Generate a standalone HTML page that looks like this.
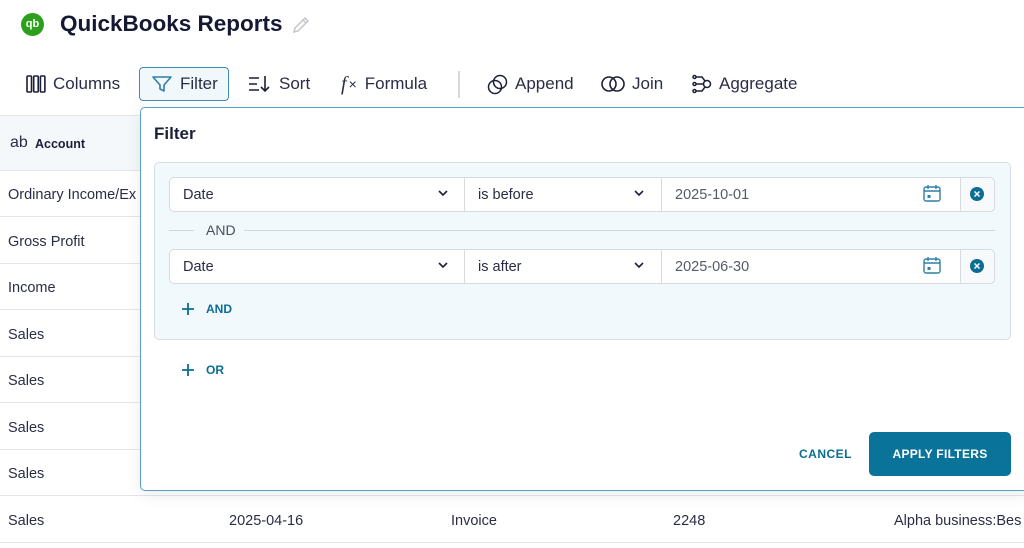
<!DOCTYPE html>
<html><head><meta charset="utf-8"><style>
*{box-sizing:border-box;margin:0;padding:0}
body{width:1024px;height:548px;overflow:hidden;background:#fff;font-family:"Liberation Sans",sans-serif;color:#1c1f3a;position:relative}
.abs{position:absolute}
.tb{position:absolute;top:67px;height:34px;display:flex;align-items:center;font-size:17px;color:#2a2d45}
.tb svg{margin-right:7px}
.row{position:absolute;left:0;width:1024px;height:1px;background:#e3e6ea}
.cell{position:absolute;left:8px;font-size:14.5px;color:#2a2d45}
.sel{position:absolute;height:35px;background:#fff;border:1px solid #d6dbe0;font-size:14.5px;display:flex;align-items:center;padding-left:13px;color:#2a2d45}
.blue{color:#0a6d94}
</style></head><body>
<div class="abs" style="left:21px;top:13px;width:23px;height:23px;border-radius:50%;background:#2ca01c;color:#fff;font-size:11px;font-weight:bold;text-align:center;line-height:23px">qb</div>
<div class="abs" style="left:60px;top:11px;font-size:22.5px;font-weight:bold;color:#141833">QuickBooks Reports</div>
<svg class="abs" style="left:291px;top:15px" width="20" height="20" viewBox="0 0 20 20"><path d="M3 17l1-4L14 3l3 3L7 16z M12 5l3 3" fill="none" stroke="#c2c6cc" stroke-width="1.5"/></svg>
<div class="tb" style="left:26px"><svg width="20" height="20" viewBox="0 0 20 20" fill="none" stroke="#1c1f3a" stroke-width="1.6"><rect x="1" y="2" width="4.5" height="16" rx="1"/><rect x="7.7" y="2" width="4.5" height="16" rx="1"/><rect x="14.4" y="2" width="4.5" height="16" rx="1"/></svg>Columns</div>
<div class="tb" style="left:139px;width:90px;border:1px solid #3f8fb0;border-radius:4px;background:#f1f8fb;padding-left:11px"><svg width="22" height="20" viewBox="0 0 22 20" fill="none" stroke="#2f7fa6" stroke-width="1.6"><path d="M2 3h18l-7 8v6l-4-2v-4z" stroke-linejoin="round"/></svg>Filter</div>
<div class="tb" style="left:248px"><svg width="24" height="20" viewBox="0 0 24 20" fill="none" stroke="#1c1f3a" stroke-width="1.6"><path d="M1 4h10M1 10h8M1 16h10M17 2v15M13 13l4 4 4-4"/></svg>Sort</div>
<div class="tb" style="left:341px"><span style="font-style:italic;font-family:'Liberation Serif',serif;font-size:20px;margin-right:2px">f</span><span style="font-size:14px;margin-right:8px">×</span>Formula</div>
<div class="abs" style="left:458px;top:71px;width:2px;height:27px;background:#d5d8dc"></div>
<div class="tb" style="left:487px"><svg width="21" height="21" viewBox="0 0 21 21" fill="none" stroke="#1c1f3a" stroke-width="1.5"><circle cx="8" cy="13" r="6.5"/><circle cx="13" cy="8" r="6.5"/></svg>Append</div>
<div class="tb" style="left:601px"><svg width="24" height="20" viewBox="0 0 24 20" fill="none" stroke="#1c1f3a" stroke-width="1.6"><circle cx="8" cy="10" r="7"/><circle cx="16" cy="10" r="7"/></svg>Join</div>
<div class="tb" style="left:692px"><svg width="20" height="20" viewBox="0 0 20 20" fill="none" stroke="#1c1f3a" stroke-width="1.5"><circle cx="2.5" cy="3" r="1.5"/><circle cx="2.5" cy="10" r="1.5"/><circle cx="2.5" cy="17" r="1.5"/><path d="M4 3h6l3 4M4 10h8M4 17h6l3-4"/><circle cx="15" cy="10" r="3.5"/></svg>Aggregate</div>
<div class="abs" style="left:0;top:115px;width:1024px;height:55px;background:#f4f8fa;border-top:1px solid #e3e6ea"></div>
<div class="abs" style="left:10px;top:134px;font-size:16px;color:#2a2d45">ab</div>
<div class="abs" style="left:35px;top:137px;font-size:12.5px;font-weight:bold">Account</div>
<div class="row" style="top:170px"></div><div class="row" style="top:216px"></div><div class="row" style="top:263px"></div><div class="row" style="top:309px"></div><div class="row" style="top:356px"></div><div class="row" style="top:402px"></div><div class="row" style="top:449px"></div><div class="row" style="top:495px"></div><div class="row" style="top:542px"></div>
<div class="cell" style="top:187px">Ordinary Income/Ex</div>
<div class="cell" style="top:234px">Gross Profit</div>
<div class="cell" style="top:280px">Income</div>
<div class="cell" style="top:327px">Sales</div>
<div class="cell" style="top:373px">Sales</div>
<div class="cell" style="top:420px">Sales</div>
<div class="cell" style="top:466px">Sales</div>
<div class="cell" style="top:513px">Sales</div>
<div class="cell" style="top:513px;left:229px">2025-04-16</div>
<div class="cell" style="top:513px;left:451px">Invoice</div>
<div class="cell" style="top:513px;left:673px">2248</div>
<div class="cell" style="top:513px;left:894px;white-space:nowrap">Alpha business:Bes</div>
<div class="abs" style="left:140px;top:107px;width:890px;height:384px;background:#fff;border:1.5px solid #5a9fbf;border-radius:5px;box-shadow:0 4px 16px rgba(0,0,0,0.08)"></div>
<div class="abs" style="left:154px;top:124px;font-size:17px;font-weight:bold;color:#1c1f3a">Filter</div>
<div class="abs" style="left:154px;top:162px;width:857px;height:178px;background:#f2f9fc;border:1px solid #d6dde2;border-radius:5px"></div>
<div class="sel" style="left:169px;top:177px;width:296px;border-radius:5px 0 0 5px">Date</div>
<div class="sel" style="left:464px;top:177px;width:198px">is before</div>
<div class="sel" style="left:661px;top:177px;width:300px;color:#555a66">2025-10-01</div>
<div class="sel" style="left:960px;top:177px;width:35px;border-radius:0 5px 5px 0;background:#f7f9fa"></div>
<div class="abs" style="left:169px;top:230px;width:25px;height:1px;background:#cfd5da"></div>
<div class="abs" style="left:206px;top:222px;font-size:14px;color:#4a4e5c">AND</div>
<div class="abs" style="left:244px;top:230px;width:751px;height:1px;background:#cfd5da"></div>
<div class="sel" style="left:169px;top:249px;width:296px;border-radius:5px 0 0 5px">Date</div>
<div class="sel" style="left:464px;top:249px;width:198px">is after</div>
<div class="sel" style="left:661px;top:249px;width:300px;color:#555a66">2025-06-30</div>
<div class="sel" style="left:960px;top:249px;width:35px;border-radius:0 5px 5px 0;background:#f7f9fa"></div>
<svg class="abs" style="left:0;top:0" width="1024" height="548" fill="none">
<g stroke="#1c1f3a" stroke-width="1.6"><path d="M439 191l4 4 4-4M635 191l4 4 4-4M439 263l4 4 4-4M635 263l4 4 4-4"/></g>
<g stroke="#2f7fa6" stroke-width="1.4"><rect x="924" y="187" width="16" height="14" rx="2"/><path d="M924 191h16M928 185v4M936 185v4"/><rect x="924" y="259" width="16" height="14" rx="2"/><path d="M924 263h16M928 257v4M936 257v4"/></g>
<rect x="927.5" y="195" width="3" height="3" fill="#2f7fa6"/><rect x="927.5" y="267" width="3" height="3" fill="#2f7fa6"/>
<circle cx="977" cy="194" r="7" fill="#0a6d94"/><circle cx="977" cy="266" r="7" fill="#0a6d94"/>
<g stroke="#fff" stroke-width="1.5"><path d="M974.5 191.5l5 5M979.5 191.5l-5 5M974.5 263.5l5 5M979.5 263.5l-5 5"/></g>
<g stroke="#0a6d94" stroke-width="1.8"><path d="M188 303v12M182 309h12M188 364v12M182 370h12"/></g>
</svg>
<div class="abs blue" style="left:206px;top:302px;font-size:12px;font-weight:bold">AND</div>
<div class="abs blue" style="left:206px;top:363px;font-size:12px;font-weight:bold">OR</div>
<div class="abs blue" style="left:799px;top:447px;font-size:12px;font-weight:bold;letter-spacing:0.5px">CANCEL</div>
<div class="abs" style="left:869px;top:432px;width:142px;height:44px;background:#0a7399;border-radius:5px;color:#fff;font-size:12px;font-weight:bold;text-align:center;line-height:44px;letter-spacing:0.3px">APPLY FILTERS</div>
</body></html>
